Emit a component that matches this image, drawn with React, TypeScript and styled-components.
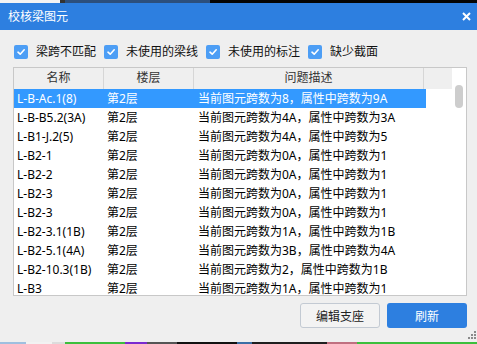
import React from 'react';
import styled, { createGlobalStyle } from 'styled-components';

const Global = createGlobalStyle`
  html, body { margin: 0; padding: 0; background: #efefef; }
  body { font-family: "Noto Sans", "Noto Sans CJK SC", "Microsoft YaHei", sans-serif; font-size: 12px; }
  * { box-sizing: border-box; }
`;

const Screen = styled.div`
  width: 477px;
  height: 344px;
  display: flex;
  flex-direction: column;
  overflow: hidden;
  position: relative;
  background: #efefef;
`;

const Strip = styled.div<{ $h: number }>`
  height: ${p => p.$h}px;
  display: flex;
  flex-shrink: 0;
`;

const Seg = styled.div<{ $w?: number; $c: string }>`
  width: ${p => (p.$w ? `${p.$w}px` : 'auto')};
  flex: ${p => (p.$w ? '0 0 auto' : '1')};
  background: ${p => p.$c};
`;

const TitleBar = styled.div`
  height: 27px;
  flex-shrink: 0;
  background: #2d7fe0;
  color: #fff;
  display: flex;
  align-items: center;
  justify-content: space-between;
  padding: 0 6px 0 8px;
  font-size: 12px;
`;

const Title = styled.span`
  line-height: 27px;
`;

const Body = styled.div`
  flex: 1;
  display: flex;
  flex-direction: column;
  padding: 0 10px 0 13px;
`;

const Options = styled.div`
  margin-top: 15px;
  height: 14px;
  display: flex;
  align-items: center;
  gap: 8px;
  padding-left: 1px;
`;

const Option = styled.label`
  display: flex;
  align-items: center;
  gap: 8px;
  color: #111;
  font-size: 12px;
  line-height: 14px;
`;

const Box = styled.span`
  width: 14px;
  height: 14px;
  border-radius: 2px;
  background: #4d9ef5;
  display: flex;
  align-items: center;
  justify-content: center;
`;

const Table = styled.div`
  margin-top: 8px;
  height: 229px;
  border: 1px solid #c8c8c8;
  background: #fff;
  display: flex;
`;

const Main = styled.div`
  width: 438px;
  display: flex;
  flex-direction: column;
  overflow: hidden;
`;

const Header = styled.div`
  height: 21px;
  flex-shrink: 0;
  display: grid;
  grid-template-columns: 90px 90px 230px 28px;
  background: #efefef;
`;

const HeadCell = styled.div<{ $sep?: boolean }>`
  text-align: center;
  line-height: 20px;
  color: #333;
  border-right: ${p => (p.$sep ? '1px solid #d6d6d6' : 'none')};
`;

const Rows = styled.div`
  flex: 1;
  overflow: hidden;
`;

const Row = styled.div<{ $sel?: boolean }>`
  width: 412px;
  height: 19px;
  display: grid;
  grid-template-columns: 90px 90px 232px;
  background: ${p => (p.$sel ? '#3399ff' : 'transparent')};
  color: ${p => (p.$sel ? '#fff' : '#000')};
`;

const Cell = styled.div<{ $pad: number }>`
  padding-left: ${p => p.$pad}px;
  line-height: 19px;
  white-space: nowrap;
  overflow: hidden;
`;

const Scroll = styled.div`
  width: 14px;
  padding: 17px 2px 0 3px;
  background: #fff;
`;

const Thumb = styled.div`
  width: 8px;
  height: 23px;
  border-radius: 4px;
  background: #cdcdcd;
`;

const Footer = styled.div`
  margin-top: 7px;
  display: flex;
  justify-content: flex-end;
  gap: 7px;
`;

const Button = styled.button<{ $primary?: boolean }>`
  width: 80px;
  height: 25px;
  border-radius: 3px;
  font-family: inherit;
  font-size: 12px;
  padding: 0;
  cursor: pointer;
  border: ${p => (p.$primary ? 'none' : '1px solid #c3cad3')};
  background: ${p => (p.$primary ? '#2d7fe0' : '#f3f3f3')};
  color: ${p => (p.$primary ? '#fff' : '#222')};
`;

const Grip = styled.svg`
  position: absolute;
  right: 1px;
  bottom: 5px;
`;

const rows = [
  ['L-B-Ac.1(8)', '第2层', '当前图元跨数为8，属性中跨数为9A'],
  ['L-B-B5.2(3A)', '第2层', '当前图元跨数为4A，属性中跨数为3A'],
  ['L-B1-J.2(5)', '第2层', '当前图元跨数为4A，属性中跨数为5'],
  ['L-B2-1', '第2层', '当前图元跨数为0A，属性中跨数为1'],
  ['L-B2-2', '第2层', '当前图元跨数为0A，属性中跨数为1'],
  ['L-B2-3', '第2层', '当前图元跨数为0A，属性中跨数为1'],
  ['L-B2-3', '第2层', '当前图元跨数为0A，属性中跨数为1'],
  ['L-B2-3.1(1B)', '第2层', '当前图元跨数为1A，属性中跨数为1B'],
  ['L-B2-5.1(4A)', '第2层', '当前图元跨数为3B，属性中跨数为4A'],
  ['L-B2-10.3(1B)', '第2层', '当前图元跨数为2，属性中跨数为1B'],
  ['L-B3', '第2层', '当前图元跨数为1A，属性中跨数为1'],
];

const options = ['梁跨不匹配', '未使用的梁线', '未使用的标注', '缺少截面'];

const Check = () => (
  <svg width="10" height="10" viewBox="0 0 10 10">
    <path d="M2 5.2 L4.2 7.2 L8.2 2.8" stroke="#fff" strokeWidth="1.6" fill="none" strokeLinecap="round" strokeLinejoin="round" />
  </svg>
);

export default function App() {
  return (
    <Screen>
      <Global />
      <Strip $h={3}>
        <Seg $w={60} $c="#f4f4f4" />
        <Seg $w={5} $c="#333" />
        <Seg $w={145} $c="#2c4f7c" />
        <Seg $c="#050505" />
      </Strip>
      <TitleBar>
        <Title>校核梁图元</Title>
        <svg width="9" height="9" viewBox="0 0 9 9">
          <path d="M1 1 L8 8 M8 1 L1 8" stroke="#fff" strokeWidth="2" />
        </svg>
      </TitleBar>
      <Body>
        <Options>
          {options.map(o => (
            <Option key={o}>
              <Box><Check /></Box>
              {o}
            </Option>
          ))}
        </Options>
        <Table>
          <Main>
            <Header>
              <HeadCell $sep>名称</HeadCell>
              <HeadCell $sep>楼层</HeadCell>
              <HeadCell $sep>问题描述</HeadCell>
              <HeadCell />
            </Header>
            <Rows>
              {rows.map((r, i) => (
                <Row key={i} $sel={i === 0}>
                  <Cell $pad={3}>{r[0]}</Cell>
                  <Cell $pad={3}>{r[1]}</Cell>
                  <Cell $pad={4}>{r[2]}</Cell>
                </Row>
              ))}
            </Rows>
          </Main>
          <Scroll>
            <Thumb />
          </Scroll>
        </Table>
        <Footer>
          <Button>编辑支座</Button>
          <Button $primary>刷新</Button>
        </Footer>
      </Body>
      <Strip $h={2}>
        <Seg $w={26} $c="#9fbfdf" />
        <Seg $w={26} $c="#f2f2f2" />
        <Seg $w={13} $c="#dcdcdc" />
        <Seg $w={60} $c="#3cbf3c" />
        <Seg $w={22} $c="#7a2ad0" />
        <Seg $w={30} $c="#555" />
        <Seg $w={60} $c="#111" />
        <Seg $w={15} $c="#3b6ea5" />
        <Seg $w={75} $c="#1f1f1f" />
        <Seg $w={30} $c="#c07080" />
        <Seg $c="#3cbf3c" />
      </Strip>
      <Grip width="8" height="8" viewBox="0 0 8 8">
        <rect x="6" y="0" width="2" height="2" fill="#8a8a8a" />
        <rect x="3" y="3" width="2" height="2" fill="#8a8a8a" />
        <rect x="6" y="3" width="2" height="2" fill="#8a8a8a" />
        <rect x="0" y="6" width="2" height="2" fill="#8a8a8a" />
        <rect x="3" y="6" width="2" height="2" fill="#8a8a8a" />
        <rect x="6" y="6" width="2" height="2" fill="#8a8a8a" />
      </Grip>
    </Screen>
  );
}
